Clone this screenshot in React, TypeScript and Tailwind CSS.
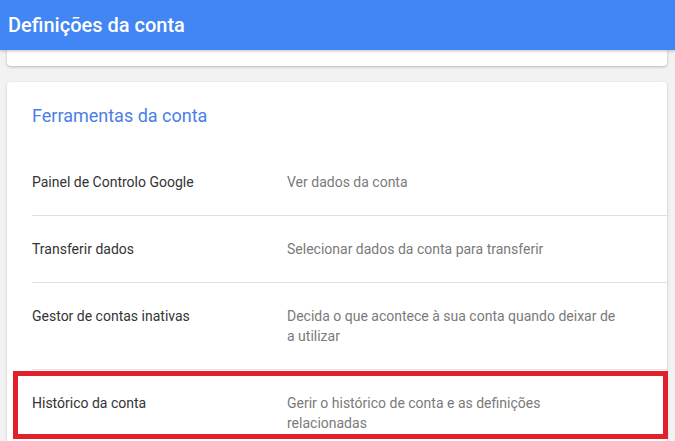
import React from 'react'

const rows = [
    { label: 'Painel de Controlo Google', desc: 'Ver dados da conta' },
    { label: 'Transferir dados', desc: 'Selecionar dados da conta para transferir' },
    { label: 'Gestor de contas inativas', desc: 'Decida o que acontece à sua conta quando deixar de a utilizar' },
    { label: 'Histórico da conta', desc: 'Gerir o histórico de conta e as definições relacionadas', marked: true },
]

function App() {

    return (

        <div className="min-h-screen bg-[#f2f2f2] font-['Roboto',sans-serif] overflow-hidden">

            {/* Header */}

            <div className="relative z-10 h-[50px] bg-[#4285f4] flex items-center px-2 shadow-[0_1px_3px_rgba(0,0,0,0.25)]">
                <h1 className="text-white text-[20px] font-medium">Definições da conta</h1>
            </div>

            {/* Previous card (scrolled) */}

            <div className="mx-[7px] w-[660px] h-[16px] bg-white shadow-[0_1px_3px_rgba(0,0,0,0.25)] rounded-b-sm" />

            {/* Account tools */}

            <div className="mt-[16px] mx-[7px] w-[660px] bg-white shadow-[0_1px_3px_rgba(0,0,0,0.2)] rounded-sm pt-6 pl-[25px]">

                <h2 className="text-[18px] leading-5 text-[#4a7ee6] mb-[23px]">Ferramentas da conta</h2>

                {rows.map(({ label, desc, marked }, index) => (

                    <div key={index} className="relative flex py-[23px] border-b border-[#e0e0e0] text-[14px] leading-5">

                        <div className="w-[255px] shrink-0 text-[#333333]">{label}</div>
                        <div className="w-[335px] text-[#7a7a7a]">{desc}</div>

                        {marked && (
                            <div className="absolute left-[-19px] top-[1px] w-[655px] h-[68px] border-[5px] border-[#e0212b]" />
                        )}

                    </div>

                ))}

            </div>

        </div>

    );

}

export default App;
